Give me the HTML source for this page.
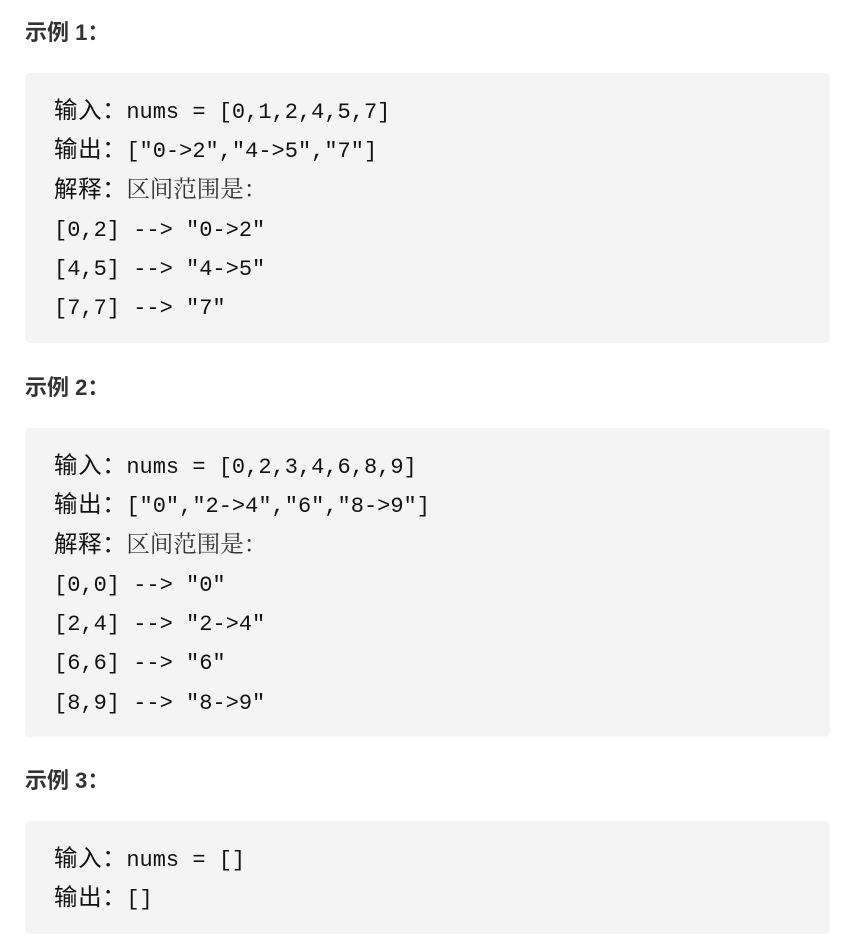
<!DOCTYPE html>
<html><head><meta charset="utf-8"><style>
html,body{margin:0;padding:0;background:#fff;width:857px;height:944px;overflow:hidden}
h3{position:absolute;left:25px;margin:0;font:bold 22px/1 "Liberation Sans","Noto Sans CJK SC",sans-serif;color:#333}
.b{position:absolute;left:25px;width:805px;box-sizing:border-box;margin:0;padding:20px 29px 14px;background:#f4f4f4;border-radius:5px;
font:22px "Liberation Mono","Noto Sans CJK SC",monospace;color:#111;white-space:pre}
.b div{height:39.3px;line-height:39.3px;overflow:visible}
.c{font-family:"Noto Sans CJK SC",sans-serif;font-size:23.5px;letter-spacing:0.6px;line-height:1}
.s{font-family:"Noto Serif CJK SC",serif;font-size:23.5px;color:#333;line-height:1}
</style></head><body>
<h3 style="top:22px">示例 1：</h3>
<div class="b" style="top:73px"><div><span class="c">输入：</span>nums = [0,1,2,4,5,7]</div><div><span class="c">输出：</span>["0-&gt;2","4-&gt;5","7"]</div><div><span class="c">解释：</span><span class="s">区间范围是：</span></div><div>[0,2] --&gt; "0-&gt;2"</div><div>[4,5] --&gt; "4-&gt;5"</div><div>[7,7] --&gt; "7"</div></div>
<h3 style="top:377px">示例 2：</h3>
<div class="b" style="top:428px"><div><span class="c">输入：</span>nums = [0,2,3,4,6,8,9]</div><div><span class="c">输出：</span>["0","2-&gt;4","6","8-&gt;9"]</div><div><span class="c">解释：</span><span class="s">区间范围是：</span></div><div>[0,0] --&gt; "0"</div><div>[2,4] --&gt; "2-&gt;4"</div><div>[6,6] --&gt; "6"</div><div>[8,9] --&gt; "8-&gt;9"</div></div>
<h3 style="top:770px">示例 3：</h3>
<div class="b" style="top:821px"><div><span class="c">输入：</span>nums = []</div><div><span class="c">输出：</span>[]</div></div>
</body></html>
